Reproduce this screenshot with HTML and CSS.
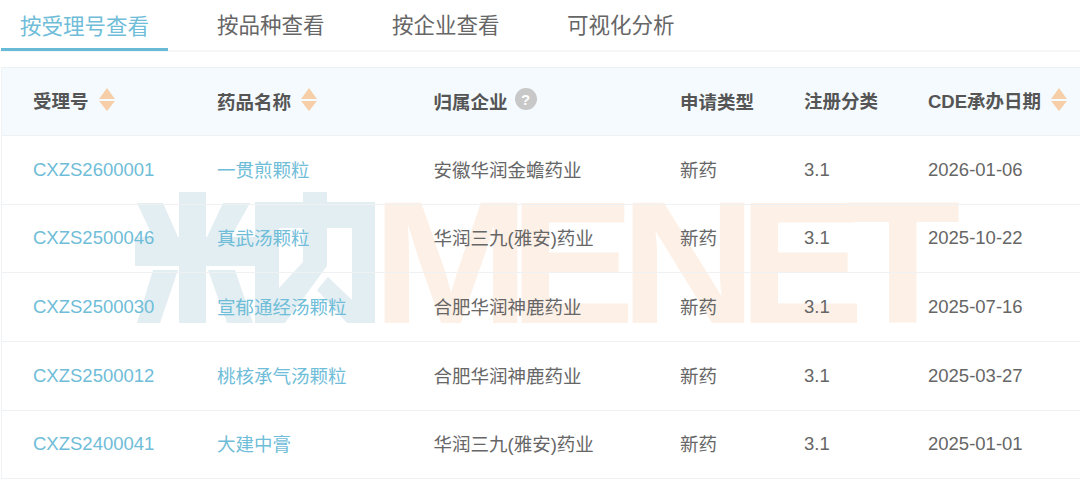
FILE: index.html
```html
<!DOCTYPE html>
<html lang="zh-CN">
<head>
<meta charset="utf-8">
<title>按受理号查看</title>
<link rel="stylesheet" href="styles.css">
</head>
<body>
<nav class="tabs">
  <a class="tab tab-active">按受理号查看</a>
  <a class="tab">按品种查看</a>
  <a class="tab">按企业查看</a>
  <a class="tab">可视化分析</a>
</nav>
<main class="panel">
  <svg class="watermark" viewBox="0 0 1080 414" width="1080" height="414" aria-hidden="true">
    <g class="wm-blue" transform="translate(0 -67)">
      <rect x="179" y="192" width="27" height="131"/>
      <rect x="135" y="237" width="120" height="29"/>
      <polygon points="137,203 163,203 178,237 153,237"/>
      <polygon points="223,203 250,203 231,237 207,237"/>
      <polygon points="153,270 178,270 160,323 137,323"/>
      <polygon points="208,270 235,270 253,323 227,323"/>
      <rect x="255" y="202" width="24" height="121"/>
      <rect x="255" y="202" width="120" height="26"/>
      <rect x="352" y="202" width="23" height="121"/>
      <polygon points="303,192 327,192 327,266 285,323 279,323 279,288 303,262"/>
      <polygon points="317,290 328,277 352,300 352,323 347,323"/>
    </g>
    <text class="wm-text" transform="translate(0 256) scale(1.09 1)" x="341.3 467 568.8 677 775" y="0">MENET</text>
  </svg>
  <div class="row row-head">
    <div class="cell"><span>受理号</span><svg class="sort" viewBox="0 0 16 23"><path d="M8 0l8 11H0zM0 13h16l-8 10z"/></svg></div>
    <div class="cell"><span>药品名称</span><svg class="sort" viewBox="0 0 16 23"><path d="M8 0l8 11H0zM0 13h16l-8 10z"/></svg></div>
    <div class="cell"><span>归属企业</span><span class="help">?</span></div>
    <div class="cell"><span>申请类型</span></div>
    <div class="cell"><span>注册分类</span></div>
    <div class="cell"><span>CDE承办日期</span><svg class="sort" viewBox="0 0 16 23"><path d="M8 0l8 11H0zM0 13h16l-8 10z"/></svg></div>
  </div>
  <div class="row">
    <div class="cell link">CXZS2600001</div><div class="cell link">一贯煎颗粒</div><div class="cell">安徽华润金蟾药业</div><div class="cell">新药</div><div class="cell">3.1</div><div class="cell">2026-01-06</div>
  </div>
  <div class="row">
    <div class="cell link">CXZS2500046</div><div class="cell link">真武汤颗粒</div><div class="cell">华润三九(雅安)药业</div><div class="cell">新药</div><div class="cell">3.1</div><div class="cell">2025-10-22</div>
  </div>
  <div class="row">
    <div class="cell link">CXZS2500030</div><div class="cell link">宣郁通经汤颗粒</div><div class="cell">合肥华润神鹿药业</div><div class="cell">新药</div><div class="cell">3.1</div><div class="cell">2025-07-16</div>
  </div>
  <div class="row">
    <div class="cell link">CXZS2500012</div><div class="cell link">桃核承气汤颗粒</div><div class="cell">合肥华润神鹿药业</div><div class="cell">新药</div><div class="cell">3.1</div><div class="cell">2025-03-27</div>
  </div>
  <div class="row">
    <div class="cell link">CXZS2400041</div><div class="cell link">大建中膏</div><div class="cell">华润三九(雅安)药业</div><div class="cell">新药</div><div class="cell">3.1</div><div class="cell">2025-01-01</div>
  </div>
</main>
</body>
</html>
```

FILE: styles.css
```css
* { box-sizing: border-box; }

html, body {
  margin: 0;
  height: 481px;
  overflow: hidden;
  background: #fff;
  font-family: "Liberation Sans", "Noto Sans CJK SC", sans-serif;
  color: #666;
}

.tabs {
  display: flex;
  height: 52px;
  padding-left: 1px;
  border-bottom: 2px solid #f6f6f6;
  font-size: 21.5px;
}

.tab {
  display: flex;
  align-items: center;
  height: 48px;
  margin-right: 67.5px;
  padding-bottom: 1px;
  color: #666;
}

.tab-active {
  height: 51px;
  margin-right: 49px;
  padding: 0 19px;
  border-bottom: 3px solid #68bbd8;
  color: #6fbdd8;
}

.panel {
  position: relative;
  margin: 15px 0 0 1px;
  border-left: 1px solid #f0f3f5;
  font-size: 18.5px;
}

.watermark {
  position: absolute;
  left: -2px;
  top: 0;
  pointer-events: none;
}

.wm-blue { fill: #e3eef2; }

.wm-text {
  fill: #fdf0e6;
  font-family: "Liberation Sans", sans-serif;
  font-size: 174px;
  font-weight: 700;
}

.row {
  position: relative;
  display: grid;
  grid-template-columns: 184px 216.5px 246.5px 124px 124px 1fr;
  align-items: center;
  height: 68.65px;
  padding-left: 31px;
  border-bottom: 1px solid #eff1f2;
}

.row-head {
  height: 69px;
  border-top: 1px solid #ecf1f4;
  background: #f4fafe;
  color: #555;
  font-weight: 700;
}

.cell {
  display: flex;
  align-items: center;
  white-space: nowrap;
}

.row > .cell:nth-child(2),
.row > .cell:nth-child(3),
.row > .cell:nth-child(4) {
  padding-bottom: 2px;
}

.row-head > .cell {
  padding-bottom: 3px;
}

.link { color: #6fbdd8; }

.sort {
  flex: none;
  width: 16px;
  height: 23px;
  margin: -2px 0 0 10px;
  fill: #f6cfa9;
}

.help {
  display: flex;
  align-items: center;
  justify-content: center;
  width: 22px;
  height: 22px;
  margin: -3px 0 0 7px;
  border-radius: 50%;
  background: #c8c8c8;
  color: #fff;
  font-size: 15px;
  font-weight: 700;
}
```
